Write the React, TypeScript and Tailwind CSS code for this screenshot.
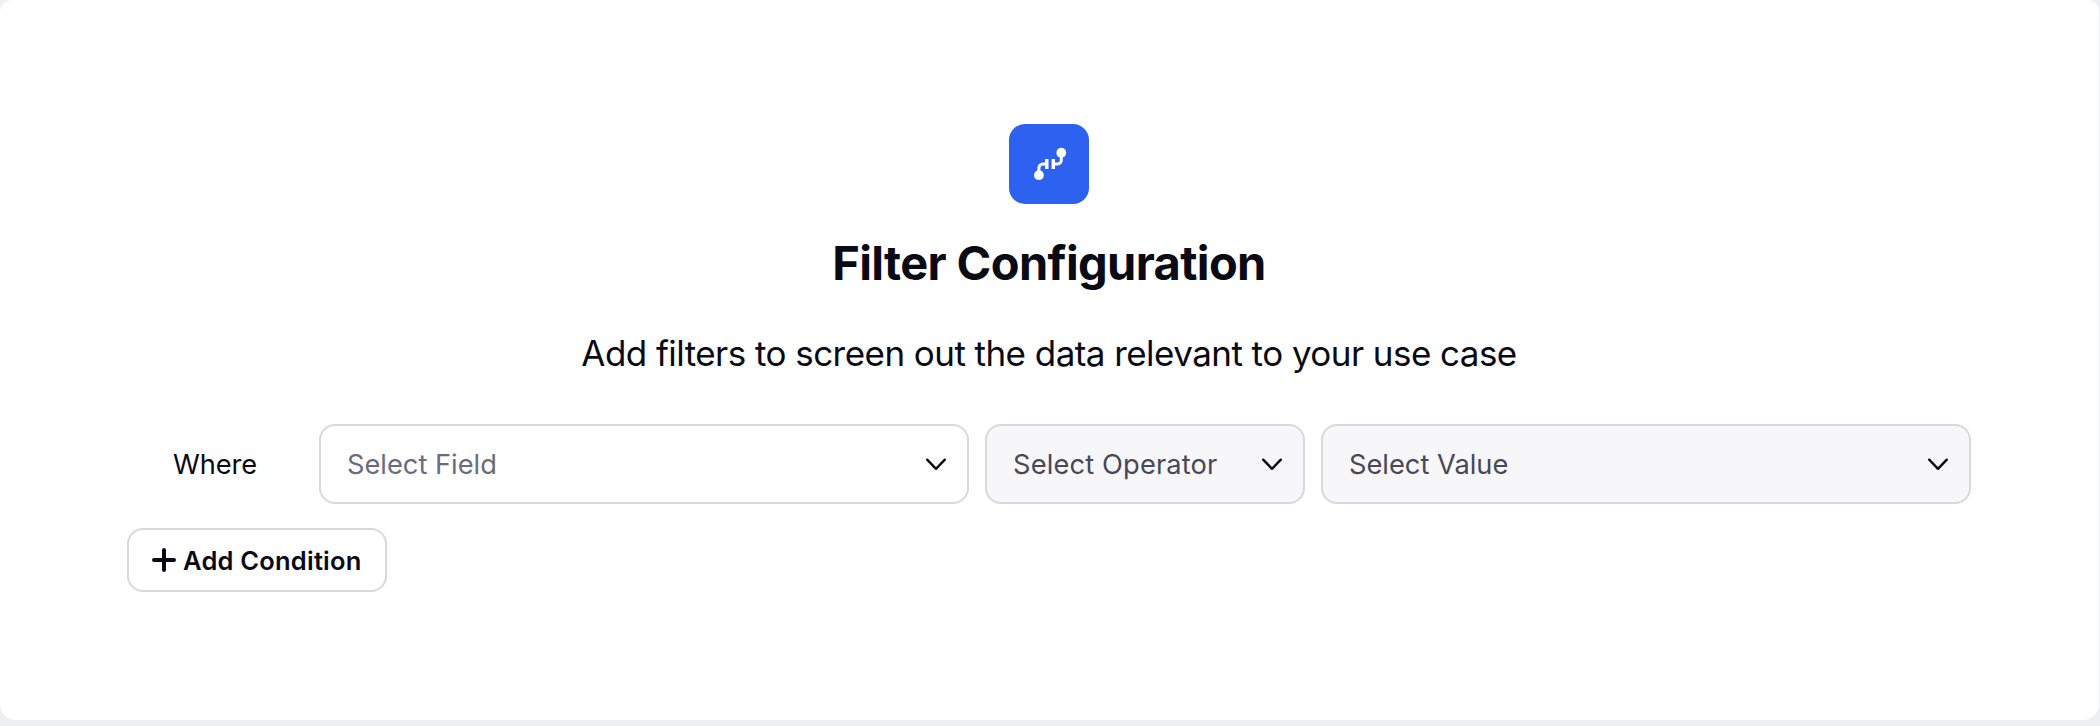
import React from "react";

function Chevron() {
  return (
    <svg width="24" height="24" viewBox="0 0 24 24" fill="none" stroke="#0a0a14" strokeWidth="2.4" strokeLinecap="round" strokeLinejoin="round" className="shrink-0">
      <path d="M3.2 7.7 12 16.8l8.8-9.1" />
    </svg>
  );
}

type SelectProps = { label: string; box: string; text: string };

function Select({ label, box, text }: SelectProps) {
  return (
    <button className={`flex h-20 items-center justify-between rounded-2xl border-2 border-[#d9d9d9] pr-[19px] pl-[26px] ${box}`}>
      <span className={`whitespace-nowrap pt-0.5 text-[27.25px] leading-9 ${text}`}>{label}</span>
      <Chevron />
    </button>
  );
}

export default function App() {
  return (
    <div className="h-[726px] w-[2100px] bg-[#eeeff0] pr-px font-['Inter','Liberation_Sans',sans-serif] text-[#0a0a14]">
      <main className="flex h-[720px] flex-col rounded-t-xl rounded-b-2xl bg-white pt-[124px] pr-32 pl-[127px]">
        <header className="flex flex-col items-center">
          <div className="flex size-20 items-center justify-center rounded-2xl bg-[#2c62ef]">
            <svg width="36" height="36" viewBox="0 0 36 36" fill="none" stroke="#fff" strokeWidth="3">
              <circle cx="7.9" cy="29.2" r="4.9" fill="#fff" stroke="none" />
              <circle cx="30.3" cy="6.7" r="4.9" fill="#fff" stroke="none" />
              <path d="M7.9 27v-5a4 4 0 0 1 4-4h3.8M30.3 9v5a4 4 0 0 1-4 4h-3.8" />
              <path strokeWidth="3.4" d="M15.8 13v10M22.3 13v10" />
            </svg>
          </div>
          <h1 className="mt-[31px] text-[47px] leading-[56px] font-bold tracking-[-0.64px]">Filter Configuration</h1>
          <p className="mt-[38px] text-[35px] leading-[48px] tracking-[-0.55px]">Add filters to screen out the data relevant to your use case</p>
        </header>
        <section className="mt-[47px] flex items-center gap-4">
          <span className="w-44 pt-0.5 text-center text-[27.25px] leading-9 tracking-[-0.1px]">Where</span>
          <Select label="Select Field" box="w-[650px] bg-white" text="text-[#6b6b7b]" />
          <Select label="Select Operator" box="w-[320px] bg-[#f7f7fa]" text="text-[#484857] tracking-[0.15px]" />
          <Select label="Select Value" box="w-[650px] bg-[#f7f7fa]" text="text-[#484857]" />
        </section>
        <button className="mt-6 flex h-16 w-[260px] items-center gap-[7px] rounded-2xl border-2 border-[#d9d9d9] bg-white pl-[23px]">
          <svg width="24" height="24" viewBox="0 0 24 24" stroke="currentColor" strokeWidth="4" strokeLinecap="round" className="shrink-0">
            <path d="M12 2v20M2 12h20" />
          </svg>
          <span className="whitespace-nowrap pt-0.5 text-[25.5px] leading-8 font-semibold tracking-[0.22px]">Add Condition</span>
        </button>
      </main>
    </div>
  );
}
